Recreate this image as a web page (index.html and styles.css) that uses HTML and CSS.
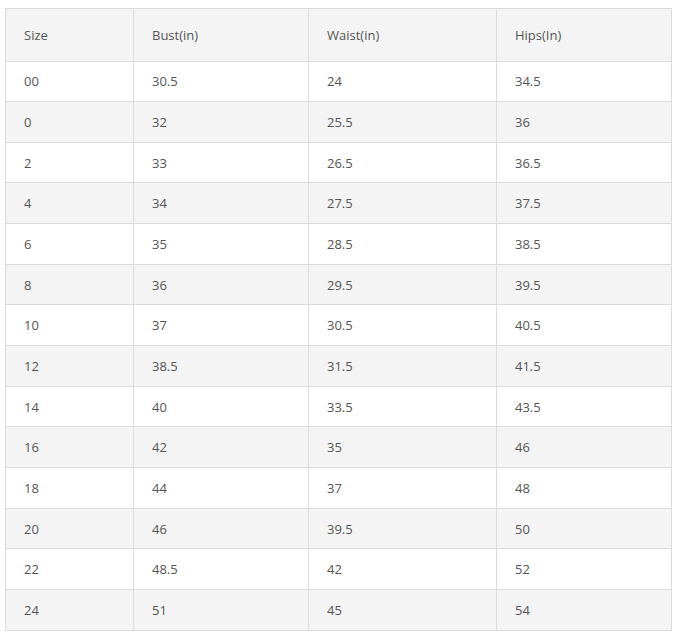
FILE: index.html
```html
<!DOCTYPE html>
<html>
<head>
<meta charset="utf-8">
<link rel="stylesheet" href="styles.css">
</head>
<body>
<table class="size-table">
  <colgroup>
    <col class="c1"><col class="c2"><col class="c3"><col class="c4">
  </colgroup>
  <thead>
    <tr><th>Size</th><th>Bust(in)</th><th>Waist(in)</th><th>Hips(In)</th></tr>
  </thead>
  <tbody>
    <tr><td>00</td><td>30.5</td><td>24</td><td>34.5</td></tr>
    <tr><td>0</td><td>32</td><td>25.5</td><td>36</td></tr>
    <tr><td>2</td><td>33</td><td>26.5</td><td>36.5</td></tr>
    <tr><td>4</td><td>34</td><td>27.5</td><td>37.5</td></tr>
    <tr><td>6</td><td>35</td><td>28.5</td><td>38.5</td></tr>
    <tr><td>8</td><td>36</td><td>29.5</td><td>39.5</td></tr>
    <tr><td>10</td><td>37</td><td>30.5</td><td>40.5</td></tr>
    <tr><td>12</td><td>38.5</td><td>31.5</td><td>41.5</td></tr>
    <tr><td>14</td><td>40</td><td>33.5</td><td>43.5</td></tr>
    <tr><td>16</td><td>42</td><td>35</td><td>46</td></tr>
    <tr><td>18</td><td>44</td><td>37</td><td>48</td></tr>
    <tr><td>20</td><td>46</td><td>39.5</td><td>50</td></tr>
    <tr><td>22</td><td>48.5</td><td>42</td><td>52</td></tr>
    <tr><td>24</td><td>51</td><td>45</td><td>54</td></tr>
  </tbody>
</table>
</body>
</html>
```
FILE: styles.css
```css
html, body {
  background: #fff;
}
body {
  margin: 8px 0 0 5px;
  font-family: "Open Sans", "Liberation Sans", sans-serif;
  font-size: 13px;
  color: #555;
}
.size-table {
  border-collapse: collapse;
  table-layout: fixed;
  width: 666px;
}
.c1 { width: 128px; }
.c2 { width: 175px; }
.c3 { width: 188px; }
.c4 { width: 175px; }
.size-table th,
.size-table td {
  border: 1px solid #dcdcdc;
  text-align: left;
  font-weight: normal;
  padding: 0 18px;
  vertical-align: middle;
}
.size-table th {
  height: 51.5px;
  background: #f4f4f4;
}
.size-table td {
  height: 39.66px;
}
.size-table tbody tr:nth-child(even) td {
  background: #f4f4f4;
}
```
